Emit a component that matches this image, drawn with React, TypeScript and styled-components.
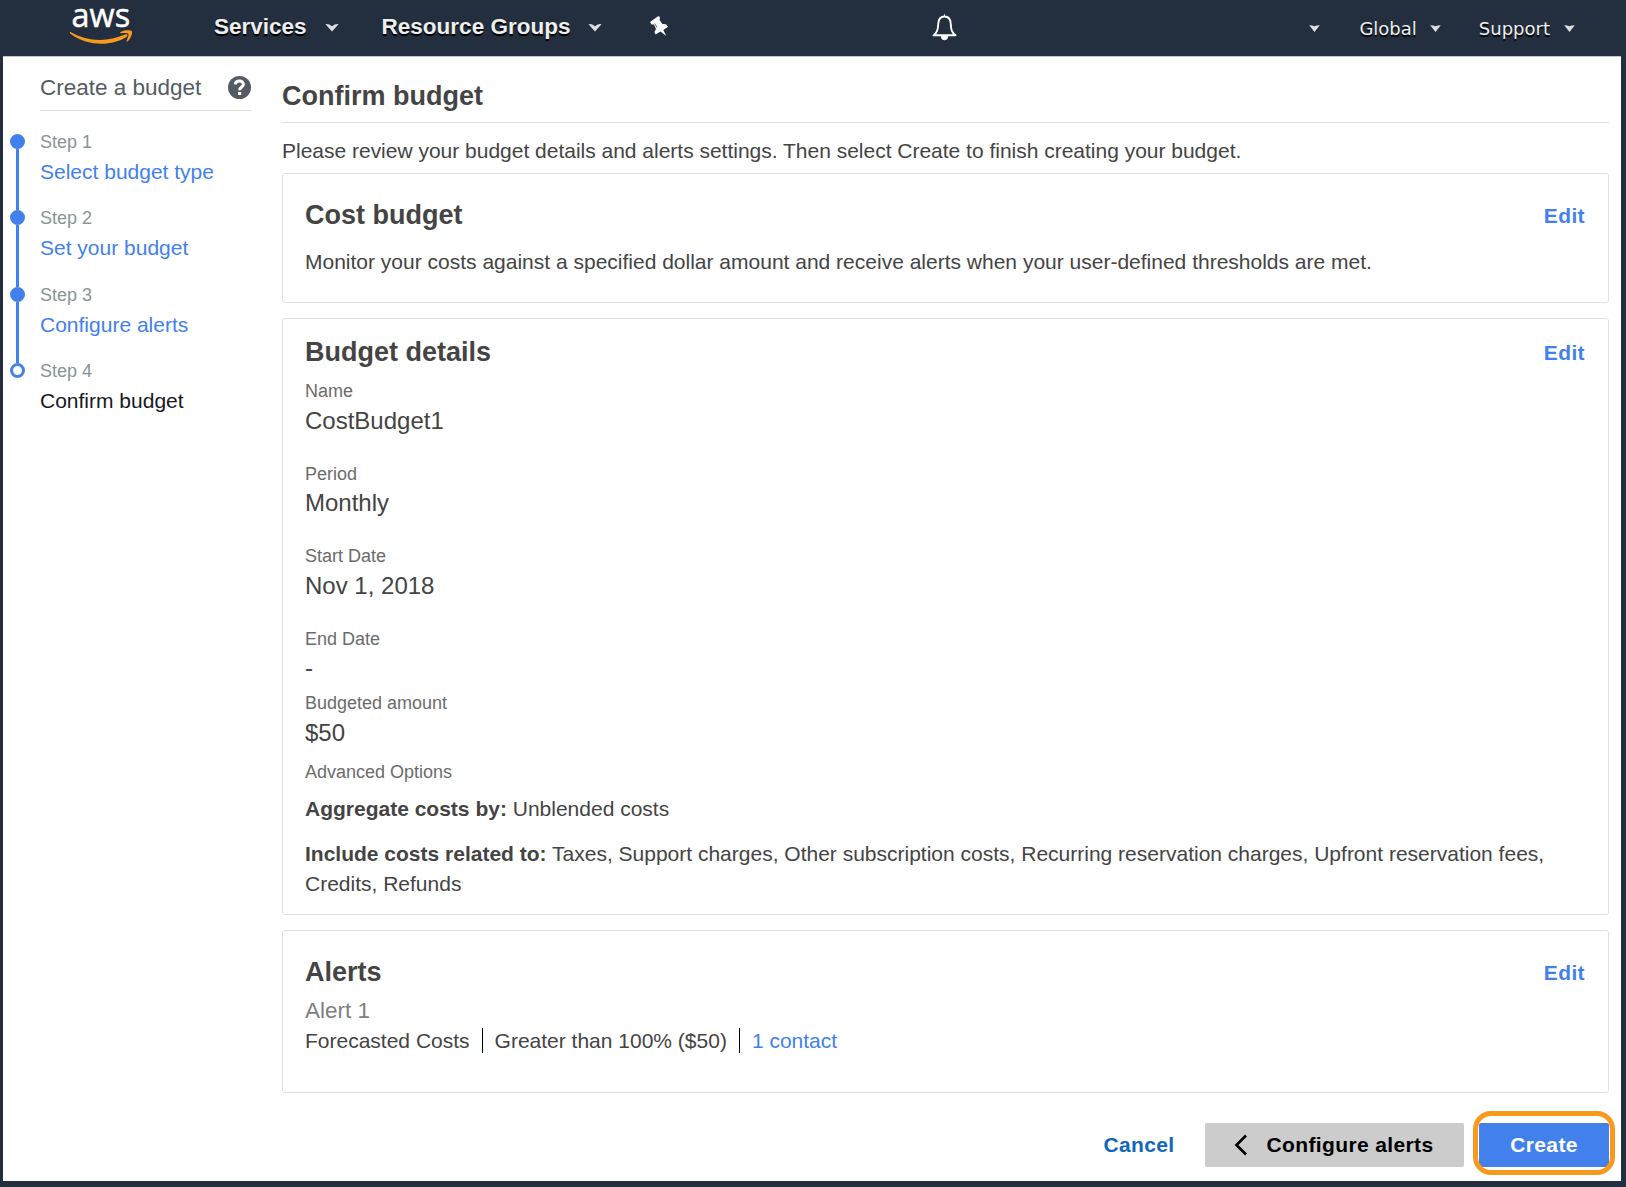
import React from "react";
import styled, { createGlobalStyle } from "styled-components";

const GlobalStyle = createGlobalStyle`
  * { box-sizing: border-box; }
  body { margin: 0; background: #232f3e; }
  h1, h2, p, ol { margin: 0; padding: 0; }
`;

const Page = styled.div`
  width: 1626px;
  height: 1187px;
  display: flex;
  flex-direction: column;
  background: #232f3e;
  padding: 0 5px 6px 3px;
  font-family: "Liberation Sans", Arial, sans-serif;
  font-size: 21px;
  line-height: 30px;
  color: #444;
`;

const Header = styled.header`
  height: 56px;
  flex: none;
  display: flex;
  align-items: flex-start;
  color: #fff;
`;

const Logo = styled.svg`
  flex: none;
  width: 64px;
  height: 42px;
  margin: 5px 0 0 66px;
  overflow: visible;
`;

const LogoText = styled.text`
  font: 500 33px "Open Sans", "Noto Sans", sans-serif;
  fill: #fff;
  stroke: #fff;
  stroke-width: 0.5px;
`;

const MenuItem = styled.div<{ $left: number; $gap: number }>`
  display: flex;
  align-items: center;
  gap: ${(p) => p.$gap}px;
  height: 30px;
  margin: 12px 0 0 ${(p) => p.$left}px;
  font-size: 22.5px;
  font-weight: 700;
  color: #eee;
  text-shadow: 0 2px 1px #000;
  white-space: nowrap;
`;

const UserItem = styled(MenuItem)`
  margin-top: 14px;
  font-family: "DejaVu Sans", Verdana, sans-serif;
  font-size: 18px;
  font-weight: 400;
`;

const Caret = styled.svg`
  display: block;
  flex: none;
`;

const HeaderIcon = styled.svg<{ $left: number; $top: number }>`
  flex: none;
  margin: ${(p) => p.$top}px 0 0 ${(p) => p.$left}px;
`;

const Body = styled.div`
  flex: 1;
  display: flex;
  background: #fff;
  border-top: 1px solid #c4c4c0;
`;

const Sidebar = styled.nav`
  width: 279px;
  flex: none;
  padding: 16px 30px 0 7px;
`;

const SideTitle = styled.div`
  display: flex;
  align-items: center;
  justify-content: space-between;
  height: 38px;
  padding: 0 1px 8px 0;
  margin-left: 30px;
  border-bottom: 1px solid #dedede;
  font-size: 22.5px;
  color: #545b64;
`;

const Steps = styled.ol`
  list-style: none;
  margin-top: 16px;
`;

const StepRow = styled.li`
  display: flex;
  gap: 15px;
  height: 76.4px;
`;

const Track = styled.div<{ $last: boolean }>`
  width: 15px;
  display: flex;
  flex-direction: column;
  align-items: center;
  padding-top: 7px;
  height: ${(p) => (p.$last ? "22px" : "83.4px")};
  flex: none;
`;

const Dot = styled.span<{ $open: boolean }>`
  width: 15px;
  height: 15px;
  flex: none;
  border-radius: 50%;
  border: 3px solid #4281ec;
  background: ${(p) => (p.$open ? "#fff" : "#4281ec")};
`;

const Line = styled.span`
  width: 3px;
  flex: 1;
  background: #4281ec;
`;

const StepNumber = styled.div`
  font-size: 18px;
  color: #879596;
`;

const StepName = styled.div<{ $current: boolean }>`
  color: ${(p) => (p.$current ? "#16191f" : "#4281ec")};
  white-space: nowrap;
`;

const Main = styled.main`
  width: 1327px;
  flex: none;
`;

const PageTitle = styled.h1`
  height: 66px;
  padding-top: 24px;
  border-bottom: 1px solid #dedede;
  font-size: 27px;
  line-height: 30px;
`;

const Intro = styled.p`
  padding-top: 13px;
  height: 50px;
  white-space: nowrap;
  letter-spacing: -0.01px;
`;

const Card = styled.section<{ $height: number; $top: number }>`
  height: ${(p) => p.$height}px;
  padding: ${(p) => p.$top}px 23px 0 22px;
  margin-bottom: 15px;
  border: 1px solid #e1e1e1;
  border-radius: 3px;
`;

const CardHead = styled.div<{ $after: number }>`
  display: flex;
  justify-content: space-between;
  align-items: center;
  height: 30px;
  margin-bottom: ${(p) => p.$after}px;
`;

const CardTitle = styled.h2`
  font-size: 27px;
`;

const EditLink = styled.a`
  padding-top: 2px;
  font-weight: 700;
  letter-spacing: 0.375px;
  color: #4281ec;
`;

const Field = styled.div<{ $after: number }>`
  margin-bottom: ${(p) => p.$after}px;
`;

const Label = styled.div`
  height: 29.6px;
  font-size: 18px;
  line-height: 30px;
  color: #6b6b6b;
`;

const Value = styled.div`
  font-size: 24px;
  line-height: 30.4px;
`;

const Option = styled.p`
  margin-bottom: 15px;
`;

const AlertName = styled.div`
  font-size: 22.5px;
  color: #7f7f7f;
`;

const AlertRow = styled.div`
  display: flex;
  align-items: center;
`;

const Divider = styled.span`
  width: 1px;
  height: 25px;
  margin: -1px 12px 0;
  background: #000;
`;

const Contact = styled.a`
  color: #4281ec;
`;

const Actions = styled.footer`
  display: flex;
  justify-content: flex-end;
  align-items: center;
  margin-top: 30px;
  gap: 15px;
`;

const Button = styled.button<{ $kind: "link" | "plain" | "primary" }>`
  position: relative;
  display: flex;
  align-items: center;
  justify-content: center;
  gap: 18px;
  height: 44px;
  width: ${(p) => ({ link: "102px", plain: "259px", primary: "130px" })[p.$kind]};
  padding: 0 ${(p) => (p.$kind === "plain" ? "1px" : "0")} 0 0;
  border: 0;
  border-radius: 2px;
  background: ${(p) => ({ link: "transparent", plain: "#ccc", primary: "#4281ec" })[p.$kind]};
  color: ${(p) => ({ link: "#1166bb", plain: "#000", primary: "#fff" })[p.$kind]};
  font: 700 21px "Liberation Sans", Arial, sans-serif;
  letter-spacing: 0.375px;
`;

const Highlight = styled.span`
  position: absolute;
  inset: -12px -6px -8px -6px;
  border: 5px solid #f8991d;
  border-radius: 18px;
`;

const DownCaret = () => (
  <Caret width="14" height="9" viewBox="0 0 14 9">
    <path d="M.5 1.300Q3 .2 7 3.200Q11 .2 13.500 1.300L7 8.500Z" fill="#ddd" />
  </Caret>
);

const SmallCaret = () => (
  <Caret width="11" height="8" viewBox="0 0 11 8">
    <path d="M.2 .3Q3 .2 5.500 1.300Q8 .2 10.800 .3L5.500 7Z" fill="#ddd" />
  </Caret>
);

const steps = ["Select budget type", "Set your budget", "Configure alerts", "Confirm budget"];

const fields = [
  { label: "Name", value: "CostBudget1", after: 22.6 },
  { label: "Period", value: "Monthly", after: 22.6 },
  { label: "Start Date", value: "Nov 1, 2018", after: 22.6 },
  { label: "End Date", value: "-", after: 4.2 },
  { label: "Budgeted amount", value: "$50", after: 9.2 },
];

export default function App() {
  return (
    <Page>
      <GlobalStyle />
      <Header>
        <Logo viewBox="0 0 64 42">
          <LogoText x="2.6" y="21.6" textLength="58.5" lengthAdjust="spacingAndGlyphs">aws</LogoText>
          <path d="M1.500 27C18 36.500 38 37.500 56 29.500C58.500 28.500 59.500 30.500 57.500 32C42 42 17 41 1.200 28.500C.5 27.500 .8 26.500 1.500 27Z" fill="#f8991d" />
          <path d="M51.500 27C56 24.500 62.500 25.300 63 26.500C63.500 29 61.500 34 58.500 36.500C57.800 37 57.400 36.500 57.700 35.800C58.600 33.500 60 30 59.300 28.800C58.500 27.600 54 28 52 28.200C51 28.200 50.800 27.500 51.500 27Z" fill="#f8991d" />
        </Logo>
        <MenuItem $left={81} $gap={18}>Services<DownCaret /></MenuItem>
        <MenuItem $left={43} $gap={18}>Resource Groups<DownCaret /></MenuItem>
        <HeaderIcon $left={48} $top={16} width="19" height="21" viewBox="0 0 19 21">
          <path d="M0 6L8 .3L9.500 .5L10 2.500L9.500 4L12.500 8L16 8.300L18 10.800L13.300 14L16.300 20L10.500 15.500L5.500 18.500L4.500 16L6 13L4 8.500L1.500 8.500Z" fill="#fff" />
          <path d="M4.800 7.500L7 11.500" stroke="#232f3e" strokeWidth=".7" />
        </HeaderIcon>
        <HeaderIcon $left={263} $top={14} width="25" height="27" viewBox="0 0 25 27">
          <path d="M12.500 2.500C8 2.500 6.500 5.500 6.300 9.500C6 16 5 18.500 1.500 21.300H23.500C20 18.500 19 16 18.700 9.500C18.500 5.500 17 2.500 12.500 2.500Z" fill="none" stroke="#fff" strokeWidth="1.900" strokeLinejoin="round" />
          <path d="M12.500 .3V2.500M9.300 22.500H15.700Q15.500 25.800 12.500 25.800T9.300 22.500Z" fill="#fff" stroke="#fff" />
        </HeaderIcon>
        <UserItem $left={352} $gap={0}><SmallCaret /></UserItem>
        <UserItem $left={39} $gap={13}>Global<SmallCaret /></UserItem>
        <UserItem $left={38} $gap={14}>Support<SmallCaret /></UserItem>
      </Header>
      <Body>
        <Sidebar>
          <SideTitle>
            Create a budget
            <svg width="23" height="23" viewBox="0 0 23 23">
              <circle cx="11.500" cy="11.500" r="11.500" fill="#545b64" />
              <path d="M7.300 8.300C7.800 3.800 15.600 4.200 15.400 8.500C15.300 11 11.600 11.200 11.600 14.300" fill="none" stroke="#fff" strokeWidth="3" />
              <rect x="10" y="16" width="3.200" height="3" fill="#fff" />
            </svg>
          </SideTitle>
          <Steps>
            {steps.map((name, i) => {
              const last = i === steps.length - 1;
              return (
                <StepRow key={name}>
                  <Track $last={last}>
                    <Dot $open={last} />
                    {!last && <Line />}
                  </Track>
                  <div>
                    <StepNumber>Step {i + 1}</StepNumber>
                    <StepName $current={last}>{name}</StepName>
                  </div>
                </StepRow>
              );
            })}
          </Steps>
        </Sidebar>
        <Main>
          <PageTitle>Confirm budget</PageTitle>
          <Intro>Please review your budget details and alerts settings. Then select Create to finish creating your budget.</Intro>
          <Card $height={130} $top={26}>
            <CardHead $after={17}><CardTitle>Cost budget</CardTitle><EditLink>Edit</EditLink></CardHead>
            <p>Monitor your costs against a specified dollar amount and receive alerts when your user-defined thresholds are met.</p>
          </Card>
          <Card $height={597} $top={18}>
            <CardHead $after={9}><CardTitle>Budget details</CardTitle><EditLink>Edit</EditLink></CardHead>
            {fields.map((f) => (
              <Field key={f.label} $after={f.after}>
                <Label>{f.label}</Label>
                <Value>{f.value}</Value>
              </Field>
            ))}
            <Field $after={7.4}><Label>Advanced Options</Label></Field>
            <Option><b>Aggregate costs by:</b> Unblended costs</Option>
            <Option><b>Include costs related to:</b> Taxes, Support charges, Other subscription costs, Recurring reservation charges, Upfront reservation fees, Credits, Refunds</Option>
          </Card>
          <Card $height={163} $top={26}>
            <CardHead $after={9}><CardTitle>Alerts</CardTitle><EditLink>Edit</EditLink></CardHead>
            <AlertName>Alert 1</AlertName>
            <AlertRow>
              Forecasted Costs<Divider />Greater than 100% ($50)<Divider /><Contact>1 contact</Contact>
            </AlertRow>
          </Card>
          <Actions>
            <Button $kind="link">Cancel</Button>
            <Button $kind="plain">
              <svg width="14" height="22" viewBox="0 0 14 22">
                <path d="M12 1.500L2.500 11L12 20.500" fill="none" stroke="#000" strokeWidth="2.600" />
              </svg>
              Configure alerts
            </Button>
            <Button $kind="primary">Create<Highlight /></Button>
          </Actions>
        </Main>
      </Body>
    </Page>
  );
}
